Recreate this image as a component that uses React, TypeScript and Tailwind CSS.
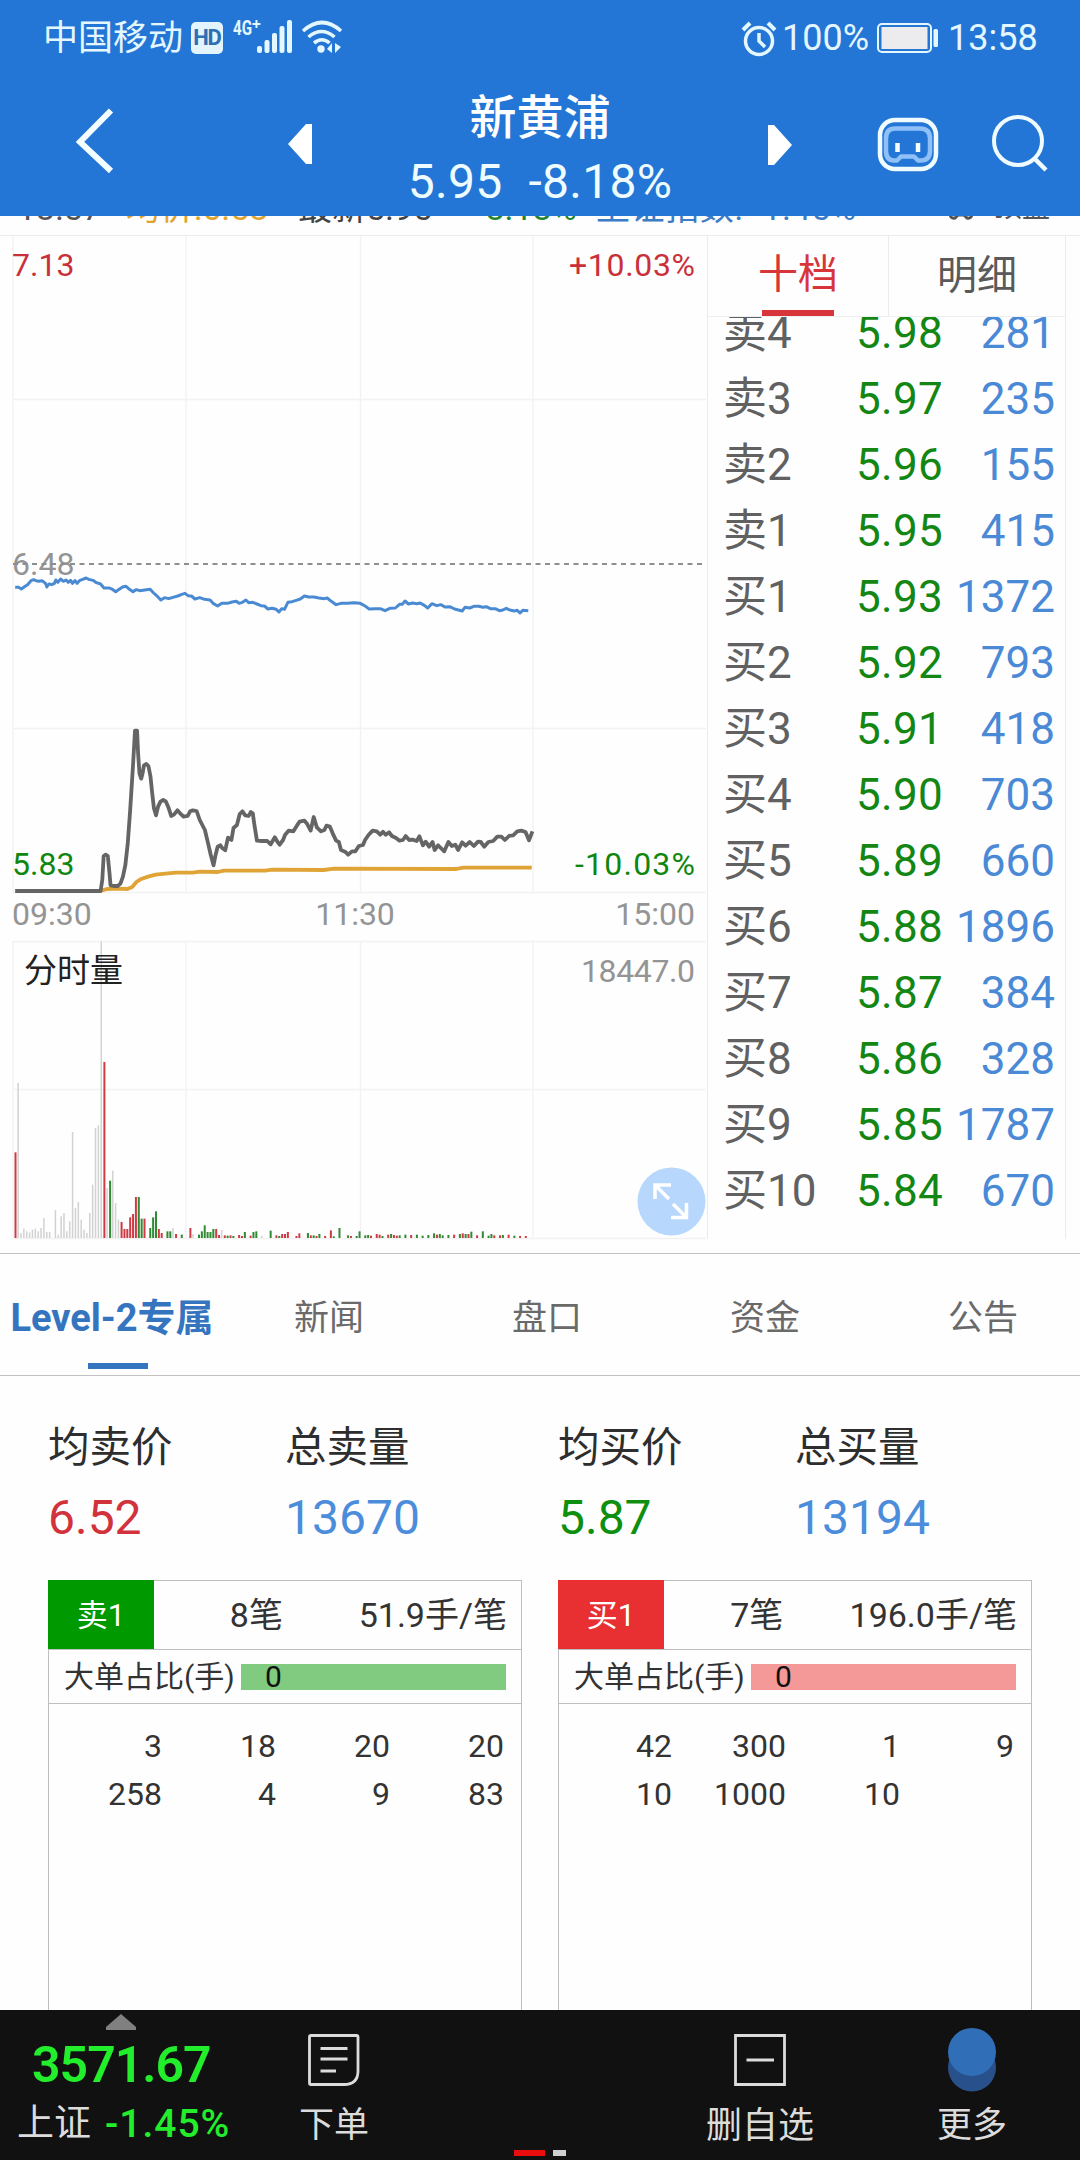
import React from 'react';

type Tone = 'r' | 'g' | 'n';

const quotes = [
  { label: '卖4', price: '5.98', volume: '281' },
  { label: '卖3', price: '5.97', volume: '235' },
  { label: '卖2', price: '5.96', volume: '155' },
  { label: '卖1', price: '5.95', volume: '415' },
  { label: '买1', price: '5.93', volume: '1372' },
  { label: '买2', price: '5.92', volume: '793' },
  { label: '买3', price: '5.91', volume: '418' },
  { label: '买4', price: '5.90', volume: '703' },
  { label: '买5', price: '5.89', volume: '660' },
  { label: '买6', price: '5.88', volume: '1896' },
  { label: '买7', price: '5.87', volume: '384' },
  { label: '买8', price: '5.86', volume: '328' },
  { label: '买9', price: '5.85', volume: '1787' },
  { label: '买10', price: '5.84', volume: '670' },
];

const stats = [
  { name: '均卖价', value: '6.52', color: 'text-[#d2323c]', width: 'w-[237px]' },
  { name: '总卖量', value: '13670', color: 'text-[#4c8ddb]', width: 'w-[273px]' },
  { name: '均买价', value: '5.87', color: 'text-[#0f8f0f]', width: 'w-[237px]' },
  { name: '总买量', value: '13194', color: 'text-[#4c8ddb]', width: 'w-[273px]' },
];

const tabs = ['新闻', '盘口', '资金', '公告'];

// Line series are kept in plot units, scaled inside the chart
const bluePoints =
  '44,142 54,142 62,147 70,141 80,134 90,122 98,119 104,122 112,124 122,122 132,130 136,141 142,132 150,134 158,130 162,120 168,127 176,117 184,124 192,120 198,127 205,121 210,130 218,122 224,130 232,121 240,118 250,114 258,118 270,121 280,128 292,132 302,144 318,144 328,149 336,155 346,148 356,141 366,139 376,148 386,155 396,149 406,152 420,150 436,148 446,159 458,170 467,180 478,173 490,176 502,172 516,168 528,163 537,160 546,167 556,168 566,177 580,173 594,178 610,180 620,191 632,198 644,190 660,190 674,186 686,184 694,190 704,187 714,180 722,188 734,187 746,192 758,197 768,198 778,207 790,205 802,208 810,216 818,206 826,208 836,187 848,185 860,181 872,177 884,168 896,171 912,171 926,174 942,176 950,174 962,184 976,194 990,190 1010,190 1026,188 1046,190 1060,198 1072,207 1090,206 1104,206 1118,212 1132,205 1148,204 1160,193 1168,193 1176,183 1186,192 1198,189 1210,191 1220,189 1232,196 1242,204 1254,191 1268,197 1280,194 1292,201 1306,200 1320,207 1342,213 1350,202 1364,204 1376,199 1390,199 1402,202 1412,200 1424,206 1438,206 1450,212 1460,210 1470,205 1480,210 1494,213 1502,211 1510,219 1518,211 1534,212';

const grayPoints =
  '44,1053 292,1053 297,1020 301,948 307,944 313,948 318,1000 321,1036 330,1038 342,1038 350,1030 357,1010 364,975 371,910 378,810 386,680 392,572 398,572 401,640 405,700 410,716 414,700 418,676 425,672 431,678 437,710 442,760 447,805 453,826 459,800 466,785 474,780 482,785 490,805 497,828 505,824 515,811 523,820 533,830 545,828 552,814 560,811 571,813 580,840 595,870 603,905 612,945 620,976 626,945 632,920 640,916 646,925 654,931 662,893 672,900 678,864 688,855 696,822 704,814 712,826 722,828 728,816 734,820 738,850 746,902 760,903 776,903 786,913 798,892 806,906 812,914 822,900 828,884 838,872 852,874 862,857 870,845 884,842 892,852 902,872 911,831 920,862 932,874 942,870 948,857 958,860 966,880 976,902 984,906 990,930 1002,935 1011,944 1022,934 1032,934 1042,918 1054,915 1060,900 1070,885 1082,872 1094,874 1104,884 1112,875 1120,884 1130,877 1138,888 1150,894 1160,902 1170,900 1178,888 1188,900 1198,899 1210,903 1218,889 1228,916 1236,905 1246,920 1256,906 1262,930 1272,916 1280,924 1290,934 1302,906 1312,918 1322,914 1330,930 1342,907 1352,917 1364,906 1376,918 1388,905 1396,906 1406,920 1418,906 1432,903 1444,890 1456,890 1466,900 1478,888 1490,886 1502,874 1514,872 1526,876 1536,901 1546,874';

const avgPoints =
  '292,1053 310,1047 345,1046 370,1047 384,1041 396,1026 408,1018 430,1010 452,1004 480,1001 512,998 560,998 580,995 632,996 650,992 770,992 790,989 940,990 970,986 1325,987 1345,983 1544,983';

// [minute, height, tone]
const volumeBars: [number, number, Tone][] = [
  [0, 257, 'r'], [1, 465, 'n'], [2, 15, 'n'], [3, 28, 'n'], [4, 20, 'n'], [5, 17, 'n'], [6, 25, 'n'], [7, 28, 'n'],
  [8, 20, 'n'], [9, 30, 'n'], [10, 60, 'n'], [11, 18, 'n'], [12, 18, 'n'], [14, 84, 'n'], [15, 10, 'n'], [16, 65, 'n'],
  [17, 75, 'n'], [18, 20, 'n'], [19, 50, 'n'], [20, 318, 'n'], [21, 90, 'n'], [22, 108, 'n'], [23, 55, 'n'], [24, 25, 'n'],
  [25, 15, 'n'], [26, 75, 'n'], [27, 160, 'n'], [28, 330, 'n'], [29, 338, 'n'], [30, 890, 'n'], [31, 528, 'r'], [32, 150, 'n'],
  [33, 172, 'g'], [34, 202, 'n'], [35, 105, 'n'], [36, 55, 'n'], [37, 48, 'r'], [38, 27, 'r'], [39, 27, 'r'], [40, 62, 'r'],
  [41, 72, 'r'], [42, 123, 'r'], [43, 123, 'g'], [44, 58, 'g'], [45, 58, 'r'], [47, 30, 'g'], [48, 62, 'g'], [49, 80, 'g'],
  [50, 27, 'r'], [51, 15, 'r'], [53, 20, 'g'], [54, 20, 'g'], [55, 30, 'n'], [56, 12, 'r'], [58, 10, 'g'], [61, 30, 'r'],
  [62, 12, 'n'], [64, 10, 'g'], [65, 20, 'g'], [66, 38, 'g'], [67, 18, 'g'], [68, 18, 'g'], [69, 27, 'g'], [70, 27, 'r'],
  [71, 9, 'r'], [72, 24, 'n'], [73, 8, 'r'], [74, 7, 'g'], [75, 8, 'r'], [76, 6, 'g'], [78, 9, 'r'], [79, 6, 'r'],
  [80, 18, 'g'], [82, 7, 'r'], [83, 18, 'g'], [84, 20, 'g'], [86, 6, 'n'], [89, 22, 'g'], [91, 8, 'r'], [92, 6, 'g'],
  [93, 12, 'r'], [94, 12, 'r'], [95, 18, 'r'], [98, 6, 'r'], [99, 14, 'r'], [102, 15, 'g'], [103, 8, 'r'], [104, 8, 'g'],
  [105, 6, 'r'], [106, 12, 'g'], [108, 6, 'r'], [110, 23, 'r'], [111, 5, 'g'], [113, 30, 'g'], [116, 8, 'g'], [117, 6, 'r'],
  [119, 6, 'g'], [120, 20, 'g'], [122, 8, 'g'], [123, 9, 'g'], [124, 7, 'r'], [126, 12, 'r'], [127, 10, 'r'], [128, 6, 'g'],
  [130, 10, 'r'], [131, 12, 'g'], [132, 9, 'r'], [133, 7, 'r'], [134, 8, 'g'], [136, 10, 'g'], [138, 9, 'r'], [140, 10, 'g'],
  [142, 7, 'g'], [144, 9, 'g'], [146, 14, 'g'], [147, 10, 'r'], [148, 12, 'g'], [149, 8, 'g'], [151, 9, 'g'], [153, 10, 'r'],
  [155, 12, 'g'], [156, 14, 'r'], [157, 12, 'g'], [158, 12, 'r'], [159, 19, 'g'], [161, 8, 'r'], [163, 20, 'g'], [165, 7, 'g'],
  [166, 12, 'g'], [167, 8, 'r'], [169, 8, 'r'], [170, 9, 'g'], [172, 10, 'r'], [174, 7, 'g'], [176, 6, 'r'], [178, 6, 'r'],
];

const toneFill: Record<Tone, string> = { r: '#cf3b45', g: '#2f8a33', n: '#d2d2d2' };

const StatusBar = () => (
  <div className="flex h-[76px] items-center pl-[43px] pr-[42px] text-[36px] leading-none text-[#e4f7ff]">
    <span className="w-[140px] whitespace-nowrap text-[35px]">中国移动</span>
    <span className="ml-2 flex h-[32px] w-[32px] items-center justify-center rounded-[5px] bg-[#e4f4fc] text-[22px] font-bold tracking-tighter text-[#2b6fb5]">
      HD
    </span>
    <svg className="ml-[9px]" width="112" height="40" viewBox="232 17 112 40" fill="#e4f7ff">
      <text x="233" y="34" fontSize="21" fontWeight="700" textLength="19" lengthAdjust="spacingAndGlyphs">4G</text>
      <path d="M256.500 19v8M252.500 23h8" stroke="#e4f7ff" strokeWidth="2" />
      <rect x="257" y="45" width="5" height="7" rx="2" />
      <rect x="264.500" y="39" width="5" height="13" rx="2" />
      <rect x="272" y="32" width="5" height="20" rx="2" />
      <rect x="279.500" y="25" width="5" height="27" rx="2" />
      <rect x="287" y="19" width="5" height="33" rx="2" />
      <g fill="none" stroke="#e4f7ff" strokeWidth="3.600">
        <path d="M303 30q19-17 38 0" />
        <path d="M308.500 36q13-11 26 0" />
        <path d="M314 42q8-6.500 15.500 0" />
      </g>
      <circle cx="321" cy="48" r="3.700" />
      <path d="M332 42v10l-5-4zM335 42v10l6-6z" />
    </svg>
    <svg className="ml-auto" width="36" height="38" viewBox="0 0 36 38" fill="none" stroke="#e4f7ff">
      <circle cx="18" cy="22" r="13.500" strokeWidth="3.500" />
      <path d="M18 14v8l6 6" strokeWidth="3.500" />
      <path d="M2 11l7-7M34 11l-7-7" strokeWidth="4" />
    </svg>
    <span className="ml-[5px] w-[88px]">100%</span>
    <svg className="ml-[7px]" width="64" height="30" viewBox="0 0 64 30">
      <rect x="1" y="1" width="53" height="28" rx="4" fill="none" stroke="#e4f7ff" strokeWidth="2" />
      <rect x="4.500" y="4" width="46" height="22" fill="#ececee" />
      <rect x="56.500" y="6" width="4.500" height="18" rx="1.500" fill="#e4f7ff" />
    </svg>
    <span className="ml-[7px] w-[90px]">13:58</span>
  </div>
);

const TitleBar = () => (
  <div className="flex h-[140px] items-start text-white">
    <svg className="ml-[70px] mt-[30px]" width="50" height="70" viewBox="0 0 50 70" fill="none" stroke="#f4fdff" strokeWidth="6">
      <path d="M41 4.500L10 36l31 29" />
    </svg>
    <svg className="ml-[168px] mt-[48px]" width="24" height="40" viewBox="0 0 24 40" fill="#fff">
      <path d="M0 20L18 0h6v40h-6z" />
    </svg>
    <div className="flex w-[456px] flex-col items-center">
      <h1 className="mt-[11px] text-[47px] font-medium leading-[62px]">新黄浦</h1>
      <div className="mt-[2px] flex gap-[26px] text-[48px] font-normal leading-[62px] tracking-[0.3px] text-[#effcff]">
        <span>5.95</span>
        <span>-8.18%</span>
      </div>
    </div>
    <svg className="mt-[49px]" width="24" height="40" viewBox="0 0 24 40" fill="#fff">
      <path d="M24 20L6 0H0v40h6z" />
    </svg>
    <svg className="ml-[84px] mt-[40px]" width="64" height="58" viewBox="0 0 64 58" fill="none">
      <rect x="4" y="4" width="56" height="49" rx="15" stroke="#effbff" strokeWidth="4.500" />
      <path d="M19 12.500h25q10 0 10 10v12q0 10-9 10h-3l-4-4H25l-4 4h-3q-8 0-8-10v-12q0-10 9-10z" stroke="#8fc0f8" strokeWidth="4.500" strokeLinejoin="round" />
      <path d="M21.500 27v9M42 27v9" stroke="#f4fdff" strokeWidth="4.500" />
    </svg>
    <svg className="ml-[49px] mt-[36px]" width="60" height="62" viewBox="0 0 60 62" fill="none" stroke="#effbff" strokeWidth="4">
      <circle cx="29" cy="29" r="24" />
      <path d="M45 46l12 12" strokeWidth="4.500" />
    </svg>
  </div>
);

// Ticker line, mostly scrolled under the title bar
const TickerStrip = () => (
  <div className="flex h-5 items-end overflow-hidden border-b border-[#ececec] text-[34px] leading-[34px]">
    <div className="mb-[10px] flex w-full whitespace-nowrap pl-[17px] pr-[30px]">
      <span className="w-[109px] text-[#555]">13:57</span>
      <span className="w-[172px] text-[#dfa32f]">均价:6.53</span>
      <span className="w-[178px] text-[#444]">最新5.95</span>
      <span className="w-[120px] text-[#25852a]">-8.18%</span>
      <span className="w-[268px] tracking-[0.6px] text-[#3b7cc6]">上证指数: -1.45%</span>
      <svg className="ml-auto mr-5" width="26" height="32" viewBox="0 0 26 32" fill="none" stroke="#555" strokeWidth="3">
        <path d="M2 12v10q0 6 5 5l3-3h6l3 3q5 1 5-5V12z" />
      </svg>
      <span className="text-[28px] text-[#555]">顶盘</span>
    </div>
  </div>
);

const MinuteChart = () => (
  <svg width="707" height="1017" viewBox="0 236 707 1017" className="block shrink-0">
    <g stroke="#f2f2f2" strokeWidth="1.300" fill="none">
      <path d="M13 236V892M186 236V892M360.500 236V892M533 236V892" />
      <path d="M13 399.500H706M13 728.500H706M13 892.500H706M13 941.500H706M13 1089.500H706M13 1238.500H706" />
      <path d="M13 941V1238M186 941V1238M360.500 941V1238M533 941V1238" />
    </g>

    <g fontSize="32" fill="#949494">
      <text x="12" y="276" fill="#c9303a">7.13</text>
      <text x="695" y="276" textAnchor="end" textLength="126" fill="#c9303a">+10.03%</text>
      <text x="12" y="575">6.48</text>
      <text x="12" y="875" fill="#0f860f">5.83</text>
      <text x="695" y="875" textAnchor="end" textLength="120" fill="#0f860f">-10.03%</text>
      <text x="12" y="925">09:30</text>
      <text x="355" y="925" textAnchor="middle">11:30</text>
      <text x="695" y="925" textAnchor="end">15:00</text>
      <text x="695" y="982" textAnchor="end" textLength="114">18447.0</text>
    </g>
    <path d="M13 564H706" stroke="#8e8e8e" strokeWidth="1.800" strokeDasharray="5 4.500" />

    <g transform="translate(0 540) scale(0.34439 0.33333)" fill="none" strokeLinejoin="round">
      <polyline points={bluePoints} stroke="#4a8ad2" strokeWidth="3" vectorEffect="non-scaling-stroke" />
      <polyline points={avgPoints} stroke="#dfa336" strokeWidth="3.800" vectorEffect="non-scaling-stroke" />
      <polyline points={grayPoints} stroke="#656565" strokeWidth="3.800" vectorEffect="non-scaling-stroke" />
    </g>

    {volumeBars.map(([minute, height, tone]) => (
      <rect
        key={minute}
        x={14.5 + minute * 2.867}
        y={1238 - height / 3}
        width={tone === 'n' ? 1.5 : 2}
        height={height / 3}
        fill={toneFill[tone]}
      />
    ))}
    <text x="24" y="982" fontSize="33" fill="#222">分时量</text>

    <circle cx="671.500" cy="1201.500" r="34" fill="#b7d7fd" />
    <path
      d="M655 1199V1185H671M656 1186L669 1199M671 1217.500H686.500V1203M673 1204L686 1217"
      fill="none"
      stroke="#fff"
      strokeWidth="3.500"
    />
  </svg>
);

const OrderBook = () => (
  <div className="flex h-[1003px] w-[359px] flex-col border-x-[1.5px] border-[#ebebeb]">
    <div className="flex h-[81px] shrink-0 border-b border-[#efefef] text-[40px]">
      <div className="flex w-[181px] flex-col items-center border-r border-[#ececec] text-[#d8353a]">
        <span className="h-[74px] leading-[78px]">十档</span>
        <span className="h-[6px] w-[72px] bg-[#d8353a]" />
      </div>
      <span className="flex-1 text-center leading-[79px] text-[#5a5a5a]">明细</span>
    </div>
    <div className="flex-1 overflow-hidden">
      <div className="-mt-[17px]">
        {quotes.map(q => (
          <div key={q.label} className="flex h-[66px] items-center pl-[15px] pr-[10px] text-[44px] leading-[66px]">
            <span className="w-[133px] text-[#616161]">{q.label}</span>
            <span className="w-[87px] tracking-[0.3px] text-[#138613]">{q.price}</span>
            <span className="flex-1 text-right text-[#4a89d6]">{q.volume}</span>
          </div>
        ))}
      </div>
    </div>
  </div>
);

interface QueueCardProps {
  side: string;
  sideClass: string;
  barClass: string;
  count: string;
  average: string;
  orders: string[];
}

const QueueCard: React.FC<QueueCardProps> = ({ side, sideClass, barClass, count, average, orders }) => (
  <div className="h-[430px] w-[474px] border border-b-0 border-[#bfbfc2] text-[#333]">
    <div className="flex h-[69px] items-center border-b border-[#bfbfc2] pr-[14px] text-[34px]">
      <span className={`-ml-px -mt-px flex h-[69px] w-[106px] items-center justify-center pt-[3px] text-[31px] text-white ${sideClass}`}>
        {side}
      </span>
      <span className="ml-auto pt-px">{count}</span>
      <span className="ml-auto pt-px">{average}</span>
    </div>
    <div className="flex h-[54px] items-center border-b border-[#bfbfc2] pl-[15px] pr-[15px] text-[30px]">
      <span className="w-[177px] whitespace-nowrap">大单占比(手)</span>
      <span className={`flex h-[26px] flex-1 items-center pl-6 leading-[26px] text-[#111] ${barClass}`}>0</span>
    </div>
    <div className="grid grid-cols-[113px_114px_114px_114px] pt-[18px] text-right text-[32px] leading-[48px]">
      {orders.map((n, i) => (
        <span key={i}>{n}</span>
      ))}
    </div>
  </div>
);

const BottomNav = () => (
  <div className="flex h-[150px] flex-col bg-[#111] text-[#dcdcdc]">
    <div className="flex h-[140px]">
      <div className="w-[240px]">
        <svg className="ml-[106px] mt-1" width="30" height="16" viewBox="0 0 30 16" fill="#808080">
          <path d="M15 0L30 13v3H0v-3z" />
        </svg>
        <div className="ml-[32px] mt-[7px] text-[50px] font-semibold leading-[56px] tracking-[-1px] text-[#22ee2c]">3571.67</div>
        <div className="ml-[17px] mt-[9px] flex items-center text-[37px] leading-[44px]">
          <span>上证</span>
          <span className="ml-3.5 text-[39px] font-medium tracking-[1px] text-[#22ee2c]">-1.45%</span>
        </div>
      </div>
      <div className="flex w-[188px] flex-col items-center pt-6">
        <svg width="52" height="52" viewBox="0 0 52 52" fill="none" stroke="#dcdcdc" strokeWidth="2.800">
          <path d="M3 1.500h45.500q1.500 0 1.500 1.500v34q0 13.500-14 13.500H3q-1.500 0-1.500-1.500V3q0-1.500 1.500-1.500z" />
          <path d="M12.500 14.500h27M12.500 25h27M12.500 37h15.500" />
        </svg>
        <span className="mt-[18px] text-[35px] leading-[44px]">下单</span>
      </div>
      <div className="ml-[238px] flex w-[188px] flex-col items-center pt-6">
        <svg width="52" height="52" viewBox="0 0 52 52" fill="none" stroke="#dcdcdc" strokeWidth="2.800">
          <path d="M1.500 1.500h49v49h-49zM12.500 26h27.500" />
        </svg>
        <span className="mt-[18px] text-[36px] leading-[44px]">删自选</span>
      </div>
      <div className="ml-[24px] flex w-[188px] flex-col items-center pt-[18px]">
        <svg width="50" height="64" viewBox="0 0 50 64">
          <circle cx="25" cy="39.500" r="24" fill="#28508a" />
          <circle cx="25" cy="24" r="24" fill="#306fb8" />
        </svg>
        <span className="mt-[12px] text-[35px] leading-[44px]">更多</span>
      </div>
    </div>
    <div className="flex gap-2 pl-[514px]">
      <span className="h-[6px] w-[31px] bg-[#ea0d0d]" />
      <span className="h-[6px] w-[13px] bg-[#d0d0d0]" />
    </div>
  </div>
);

export default function App() {
  return (
    <div className="flex h-[2160px] w-[1080px] flex-col overflow-hidden bg-[#fefefe] font-[Roboto,'Noto_Sans_CJK_SC',sans-serif]">
      <header className="h-[216px] shrink-0 bg-[#2376d5]">
        <StatusBar />
        <TitleBar />
      </header>

      <TickerStrip />

      <div className="flex h-[1017px] shrink-0">
        <MinuteChart />
        <OrderBook />
      </div>

      <nav className="flex h-[123px] shrink-0 border-y border-[#c2c2c2] pl-[3px] text-[35px] text-[#6a6a6a]">
        <div className="flex w-[218px] shrink-0 flex-col items-center">
          <span className="mt-[36px] whitespace-nowrap text-[38px] font-bold leading-[56px] text-[#3574bf]">Level-2专属</span>
          <span className="mt-[17px] ml-3 h-[6px] w-[60px] bg-[#3574bf]" />
        </div>
        {tabs.map(tab => (
          <span key={tab} className="-ml-px mr-px w-[218px] shrink-0 text-center leading-[130px]">{tab}</span>
        ))}
      </nav>

      <main className="h-[634px] shrink-0">
        <div className="flex pl-[48px] pt-[42px]">
          {stats.map(s => (
            <div key={s.name} className={`flex shrink-0 flex-col ${s.width}`}>
              <span className="text-[41.500px] leading-[60px] text-[#2e2e2e]">{s.name}</span>
              <span className={`mt-[10px] text-[48px] leading-[60px] ${s.color}`}>{s.value}</span>
            </div>
          ))}
        </div>
        <div className="mt-[32px] flex gap-9 pl-12">
          <QueueCard
            side="卖1"
            sideClass="bg-[#009900]"
            barClass="bg-[#80cb80]"
            count="8笔"
            average="51.9手/笔"
            orders={['3', '18', '20', '20', '258', '4', '9', '83']}
          />
          <QueueCard
            side="买1"
            sideClass="bg-[#e83033]"
            barClass="bg-[#f59898]"
            count="7笔"
            average="196.0手/笔"
            orders={['42', '300', '1', '9', '10', '1000', '10']}
          />
        </div>
      </main>

      <BottomNav />
    </div>
  );
}
